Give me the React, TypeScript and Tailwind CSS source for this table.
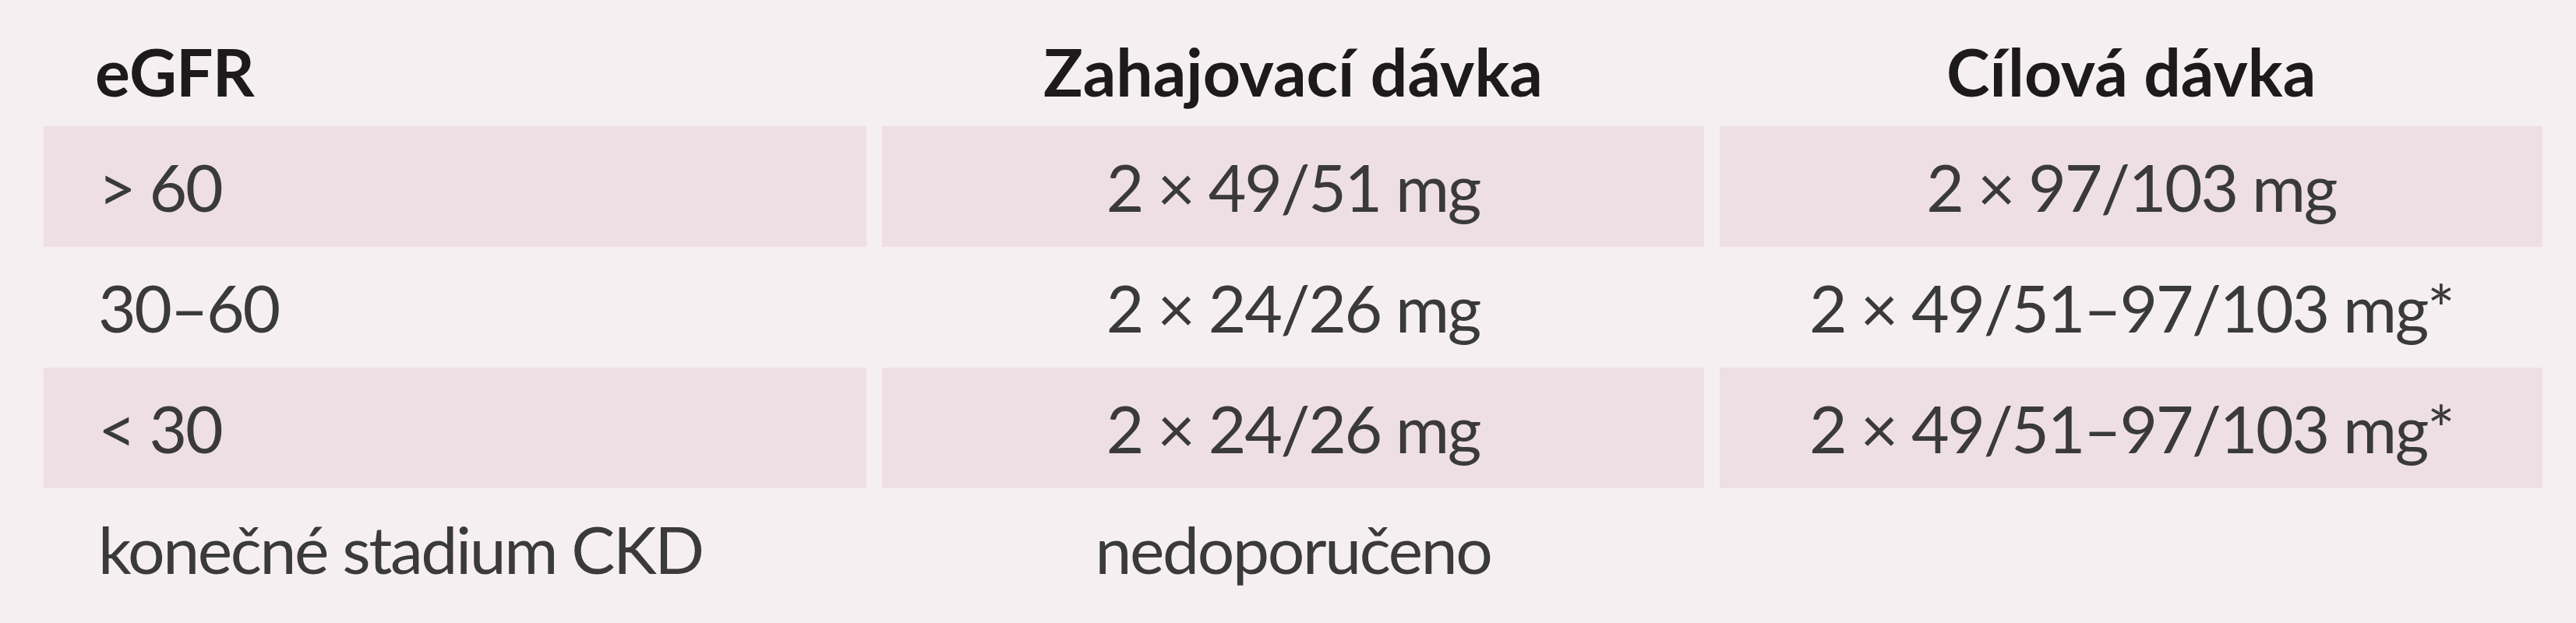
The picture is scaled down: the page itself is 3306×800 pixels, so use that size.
const rows = [
  { egfr: "> 60", start: "2 × 49/51 mg", target: "2 × 97/103 mg", band: true },
  { egfr: "30–60", start: "2 × 24/26 mg", target: "2 × 49/51–97/103 mg*", band: false },
  { egfr: "< 30", start: "2 × 24/26 mg", target: "2 × 49/51–97/103 mg*", band: true },
  { egfr: "konečné stadium CKD", start: "nedoporučeno", target: "", band: false },
]

export default function App() {
  return (
    <div className="w-[3306px] h-[800px] bg-[#f6eff2] font-['Lato','Liberation_Sans',sans-serif] text-[84px] leading-none text-[#3a3a3a]">
      <div className="grid grid-cols-3 gap-x-[20px] pl-[56px] pr-[43px]">
        <div className="h-[162px] flex items-center pt-[22px] pl-[66px] font-bold tracking-[-0.01em] text-[#1c1a1b]">eGFR</div>
        <div className="h-[162px] flex items-center justify-center pt-[22px] font-bold text-[#1c1a1b]">Zahajovací dávka</div>
        <div className="h-[162px] flex items-center justify-center pt-[22px] font-bold text-[#1c1a1b]">Cílová dávka</div>

        {rows.map((r, i) => (
          <div key={i} className="contents tracking-[-0.028em]">
            <div className={`h-[155px] flex items-center pl-[70px] ${r.band ? "bg-[#eedfe5]" : ""}`}>{r.egfr}</div>
            <div className={`h-[155px] flex items-center justify-center ${r.band ? "bg-[#eedfe5]" : ""}`}>{r.start}</div>
            <div className={`h-[155px] flex items-center justify-center ${r.band ? "bg-[#eedfe5]" : ""}`}>{r.target}</div>
          </div>
        ))}
      </div>
    </div>
  )
}
